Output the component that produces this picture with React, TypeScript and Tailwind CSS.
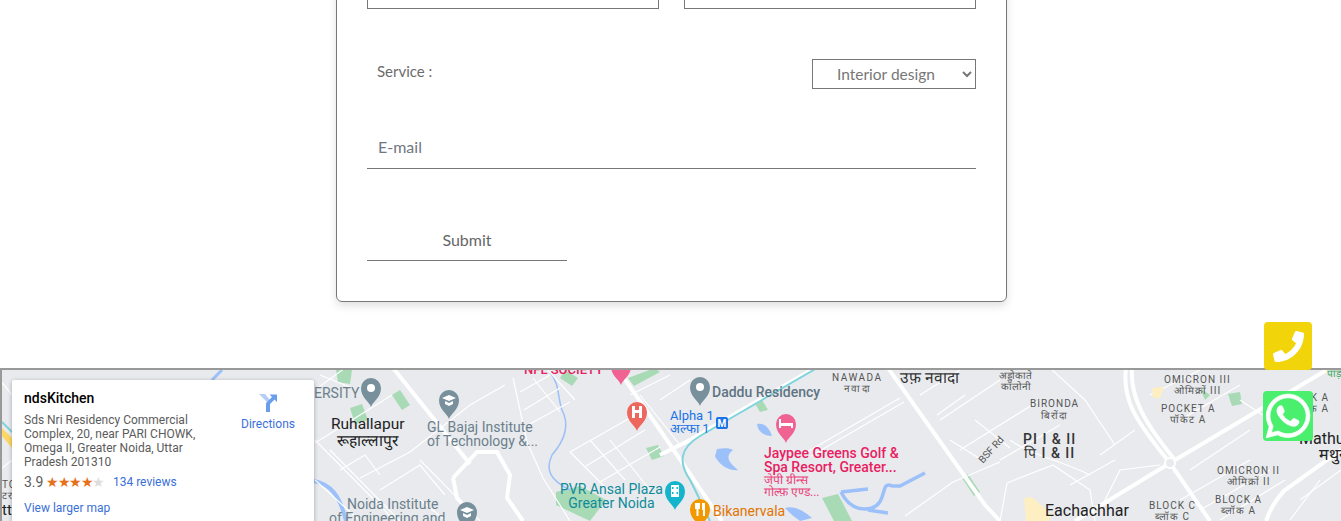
import { FaPhone, FaWhatsapp } from 'react-icons/fa';

const formFont = "font-['Lato','Noto_Sans',sans-serif]";
const mapFont = "font-['Roboto',sans-serif]";

const majorRoads = [
  'M393 368 L470 464',
  'M617 368 L660 430 L722 521',
  'M888 368 L985 505 L1000 521',
  'M1126 368 C1122 400 1135 420 1170 463 L1210 521',
  'M1132 368 C1130 395 1142 420 1175 460',
  'M1170 463 L1330 368',
  'M1170 463 L1075 521',
  'M1341 450 L1285 490 C1275 500 1270 510 1266 521',
  'M815 368 L690 440 L660 455',
  'M453 478 L477 452 L497 452 L510 475 L507 498 L523 521',
  'M453 478 L457 498 L470 512',
];

const minorRoads = [
  'M900 398 L807 452',
  'M904 402 L811 456',
  'M1000 462 L953 482 L905 516',
  'M320 375 L352 388',
  'M315 443 L360 415 L392 395',
  'M360 478 L410 452 L470 405 L505 385',
  'M315 390 L345 368',
  'M330 450 L400 521',
  'M315 440 L395 521',
  'M340 470 L365 455 L380 475',
  'M380 490 L420 465 L445 495',
  'M420 500 L445 520',
  'M513 378 L527 442 L543 478 L570 521',
  'M520 392 L550 375',
  'M524 410 L560 388',
  'M528 425 L570 402',
  'M533 378 L560 412',
  'M548 370 L575 400',
  'M570 452 L630 418',
  'M570 452 L610 492',
  'M586 466 L645 430',
  'M600 482 L660 447',
  'M610 440 L650 490',
  'M590 440 L625 480',
  'M630 395 L670 375',
  'M660 400 L690 380',
  'M640 395 L680 445',
  'M745 410 L690 440',
  'M920 395 L960 370',
  'M940 420 L1000 380',
  'M937 415 L965 395',
  'M960 450 L1040 400',
  'M950 440 L985 462',
  'M975 420 L1010 448',
  'M1000 460 L1060 425',
  'M1050 368 L1085 400 L1115 445',
  'M1010 440 C1030 455 1060 460 1090 475',
  'M1100 510 L1120 470 L1160 465',
  'M1007 483 L1053 465 L1090 490 L1095 521',
  'M1007 483 L1000 521',
  'M1070 485 L1115 460',
  'M1100 455 L1135 430',
  'M1180 420 L1240 385',
  'M1150 395 L1200 370',
  'M1190 470 L1250 430',
  'M1200 510 L1270 470',
  'M1290 520 L1320 480',
  'M1240 400 L1300 440',
  'M1180 500 L1250 460',
  'M1220 520 L1285 480',
  'M1300 500 L1341 470',
  'M0 380 L12 395',
  'M0 470 L12 460',
  'M315 480 L360 521',
  'M420 460 L480 521',
];

const greens = [
  'M336 370 L352 370 L350 384 L338 382 Z',
  'M350 408 L362 404 L368 420 L355 424 Z',
  'M392 395 L400 390 L410 405 L402 410 Z',
  'M565 370 L578 378 L572 386 L560 378 Z',
  'M628 378 L655 368 L660 372 L634 386 Z',
  'M646 448 L658 445 L664 456 L652 460 Z',
  'M556 492 L580 486 L606 500 L590 521 L556 505 Z',
  'M822 498 L838 494 L852 521 L834 521 Z',
  'M754 402 L762 400 L768 410 L760 412 Z',
  'M962 478 L968 474 L980 492 L974 496 Z',
  'M1228 394 L1240 392 L1242 404 L1232 406 Z',
  'M1200 388 L1210 395 L1205 400 Z',
];

const water = [
  'M757 424 C765 422 770 430 772 436 C764 436 758 432 757 424 Z',
  'M717 449 C724 448 730 448 733 450 C725 456 728 462 738 470 C728 472 717 462 715 456 Z',
  'M785 508 C795 505 805 512 812 518 L800 521 L792 515 Z',
];

type Pin = { x: number; y: number; color: string; glyph: 'dot' | 'cap' | 'H' | 'bed' | 'film' | 'fork' };

const pins: Pin[] = [
  { x: 371, y: 392, color: '#78909c', glyph: 'dot' },
  { x: 449, y: 404, color: '#78909c', glyph: 'cap' },
  { x: 467, y: 516, color: '#78909c', glyph: 'cap' },
  { x: 621, y: 370, color: '#f06292', glyph: 'dot' },
  { x: 637, y: 416, color: '#ee675c', glyph: 'H' },
  { x: 700, y: 391, color: '#78909c', glyph: 'dot' },
  { x: 786, y: 428, color: '#f06292', glyph: 'bed' },
  { x: 675, y: 495, color: '#12b5cb', glyph: 'film' },
  { x: 700, y: 513, color: '#f29900', glyph: 'fork' },
];

function MapPin({ x, y, color, glyph }: Pin) {
  return (
    <g transform={`translate(${x} ${y})`}>
      <path d="M0 15 C-2 9 -10 6 -10 -4 A10 10 0 0 1 10 -4 C10 6 2 9 0 15 Z" fill={color} />
      {glyph === 'dot' && <circle cy="-4" r="4" fill="#fff" />}
      {glyph === 'cap' && <path d="M-7 -6 L0 -9 L7 -6 L0 -3 Z M-4 -3 L-4 0 L0 2 L4 0 L4 -3 L0 -1 Z" fill="#fff" />}
      {glyph === 'H' && <path d="M-5 -10 H-2 V-6 H2 V-10 H5 V2 H2 V-3 H-2 V2 H-5 Z" fill="#fff" />}
      {glyph === 'bed' && <path d="M-7 -9 H-5 V-5 H7 V0 H5 V-2 H-5 V0 H-7 Z" fill="#fff" />}
      {glyph === 'film' && <path d="M-4 -10 H4 V2 H-4 Z M-3 -8 V-6 H-1.500 V-8 Z M1.500 -8 V-6 H3 V-8 Z M-3 -3 V-1 H-1.500 V-3 Z M1.500 -3 V-1 H3 V-3 Z" fill="#fff" fillRule="evenodd" />}
      {glyph === 'fork' && <path d="M-5 -10 V-4 H-3.500 V3 H-1.500 V-4 H0 V-10 Z M2 -10 H5 V3 H3 V-3 H2 Z" fill="#fff" />}
    </g>
  );
}

function RoadMap() {
  return (
    <svg viewBox="2 370 1339 151" className="absolute inset-0 h-full w-full">
      {greens.map(d => <path key={d} d={d} fill="#a8dab5" />)}
      {water.map(d => <path key={d} d={d} fill="#9cc0f9" />)}
      <path d="M550 372 C560 385 557 395 562 410 C570 425 565 440 552 455 C545 470 550 480 570 490" fill="none" stroke="#9cc0f9" strokeWidth="1.500" />
      <path d="M314 481 C330 484 340 495 346 521" fill="none" stroke="#9cc0f9" strokeWidth="4" />
      <path d="M212 380 L222 370" fill="none" stroke="#9cc0f9" strokeWidth="3" />
      <path d="M841 492 C846 502 855 512 872 508 C888 502 880 480 892 486 L900 486 L925 473 M868 510 L888 513 M841 492 L868 489" fill="none" stroke="#9cc0f9" strokeWidth="3.500" />
      {minorRoads.map(d => <path key={d} d={d} fill="none" stroke="#fff" strokeWidth="1.200" />)}
      {majorRoads.map(d => <path key={d} d={d} fill="none" stroke="#fff" strokeWidth="4" />)}
      <circle cx="1170" cy="463" r="5" fill="#e8eaed" stroke="#fff" strokeWidth="2" />
      <path d="M817 368 L700 436 C680 448 678 462 690 480 C698 495 702 505 710 521" fill="none" stroke="#7fd4dc" strokeWidth="2" />
      <path d="M2 428 L12 438 V448 L2 436 Z" fill="#fdd663" />
      <path d="M2 422 L12 432" fill="none" stroke="#7fd4dc" strokeWidth="2" />
      <path d="M1152 388 L1164 387 L1160 398 L1153 398 Z" fill="#feefc3" />
      <path d="M1024 498 L1032 497 L1052 515 L1048 521 L1026 521 Z" fill="#feefc3" />
      {pins.map(p => <MapPin key={`${p.x}-${p.y}`} {...p} />)}
    </svg>
  );
}

export default function App() {
  return (
    <div className="relative h-[521px] w-[1341px] overflow-hidden bg-white">
      <div className={`${formFont} ml-[336px] -mt-[20px] h-[322px] w-[671px] rounded-b-md border border-[#777] px-[30px] text-[#6c6c6c] shadow-[0_4px_8px_rgba(0,0,0,0.12)]`}>
        <div className="flex gap-[25px]">
          <input className="h-[28px] w-[292px] border border-[#777]" />
          <input className="h-[28px] w-[292px] border border-[#777]" />
        </div>

        <div className="mt-[50px] flex w-[609px] items-start justify-between pl-[10px]">
          <label className="mt-[1px] text-[15px]">Service :</label>
          <select className="h-[30px] w-[164px] border border-[#777] bg-white pl-[20px] text-[15.5px] text-[#777]">
            <option>Interior design</option>
          </select>
        </div>

        <input
          placeholder="E-mail"
          className="mt-[40px] block h-[40px] w-[609px] border-b border-[#777] px-[11px] pb-[5px] text-[16px] placeholder:text-[#6f7780]"
        />

        <button className="mt-[52px] block h-[40px] w-[200px] border-b border-[#777] pb-[2px] text-[16px] text-[#666]">Submit</button>
      </div>

      <div className={`${mapFont} relative mt-[66px] h-[153px] overflow-hidden border-l-2 border-t-2 border-[#999] bg-[#e8eaed]`}>
        <RoadMap />

        <div className="absolute left-[329px] top-[46px] text-center text-[15.5px] leading-[17px] text-[#222]">Ruhallapur<br />रूहाल्लापुर</div>
        <div className="absolute left-[425px] top-[50px] text-[14px] leading-[14px] text-[#6b7f8c]">GL Bajaj Institute<br />of Technology &amp;...</div>
        <div className="absolute left-[327px] top-[127px] text-center text-[14px] leading-[14px] text-[#6b7f8c]">Noida Institute<br />of Engineering and...</div>
        <div className="absolute left-[312px] top-[13px] text-[14px] text-[#6b7f8c]">ERSITY</div>
        <div className="absolute left-[522px] -top-[10px] text-[13px] font-medium text-[#e91e63]">NFL SOCIETY</div>
        <div className="absolute left-[710px] top-[12px] text-[14px] font-medium text-[#5f7482]">Daddu Residency</div>
        <div className="absolute left-[668px] top-[39px] text-[13px] leading-[13px] text-[#1a73e8]">Alpha 1<br />अल्फा 1</div>
        <div className="absolute left-[714px] top-[47px] flex h-[12px] w-[12px] items-center justify-center rounded-[2px] bg-[#1a73e8] text-[10px] font-bold text-white">M</div>
        <div className="absolute left-[558px] top-[112px] text-center text-[14px] leading-[14px] text-[#0f8b9b]">PVR Ansal Plaza<br />Greater Noida</div>
        <div className="absolute left-[762px] top-[76px] text-[14px] font-medium leading-[14px] text-[#e91e63]">Jaypee Greens Golf &amp;<br />Spa Resort, Greater...</div>
        <div className="absolute left-[762px] top-[104px] text-[12px] leading-[12px] text-[#ec407a]">जेपी ग्रीन्स<br />गोल्फ़ एण्ड...</div>
        <div className="absolute left-[711px] top-[134px] text-[14px] leading-[14px] text-[#e37400]">Bikanervala</div>
        <div className="absolute left-[830px] top-[2px] text-center text-[10px] leading-[11px] tracking-[1.5px] text-[#555]">NAWADA<br />नवादा</div>
        <div className="absolute left-[898px] -top-[3px] text-[15.5px] text-[#333]">उफ़ नवादा</div>
        <div className="absolute left-[997px] top-[0px] text-center text-[10px] leading-[11px] text-[#555]">अड्डोकाते<br />कॉलोनी</div>
        <div className="absolute left-[1028px] top-[28px] text-center text-[10px] leading-[12px] tracking-[1px] text-[#555]">BIRONDA<br />बिरोंदा</div>
        <div className="absolute left-[973px] top-[72px] rotate-[-48deg] text-[10px] text-[#555]">BSF Rd</div>
        <div className="absolute left-[1021px] top-[62px] text-center text-[14px] font-medium leading-[14px] tracking-[1px] text-[#333]">PI I &amp; II<br />पि I &amp; II</div>
        <div className="absolute left-[1043px] top-[129px] text-[16px] text-[#222]">Eachachhar</div>
        <div className="absolute left-[1162px] top-[4px] text-center text-[10px] leading-[11px] tracking-[1px] text-[#555]">OMICRON III<br />ओमिक्रों III</div>
        <div className="absolute left-[1159px] top-[33px] text-center text-[10px] leading-[11px] tracking-[1px] text-[#555]">POCKET A<br />पॉकेट A</div>
        <div className="absolute left-[1215px] top-[95px] text-center text-[10px] leading-[11px] tracking-[1px] text-[#555]">OMICRON II<br />ओमिक्रों II</div>
        <div className="absolute left-[1213px] top-[124px] text-center text-[10px] leading-[11px] tracking-[1px] text-[#555]">BLOCK A<br />ब्लॉक A</div>
        <div className="absolute left-[1147px] top-[130px] text-center text-[10px] leading-[11px] tracking-[1px] text-[#555]">BLOCK C<br />ब्लॉक C</div>
        <div className="absolute left-[1280px] top-[22px] text-right text-[10px] leading-[11px] tracking-[1px] text-[#555]">BLOCK A<br />ब्लॉक A</div>
        <div className="absolute left-[1325px] -top-[4px] text-[10px] text-[#34a853]">पाड़ा</div>
        <div className="absolute left-[1288px] top-[61px] w-[60px] text-right text-[16px] leading-[16px] text-[#222]">Mathur<br />मथुरा</div>
        <div className="absolute left-[0px] top-[109px] text-[10px] leading-[11px] tracking-[1px] text-[#555]">TO<br />टर</div>
        <div className="absolute left-[0px] top-[129px] text-[15px] text-[#222]">tt</div>

        <div className="absolute left-[10px] top-[10px] h-[150px] w-[302px] rounded-[2px] bg-white px-[12px] pt-[9px] shadow-[0_1px_4px_rgba(0,0,0,0.3)]">
          <div className="flex justify-between">
            <div className="w-[180px]">
              <div className="text-[14px] font-medium leading-[19px] text-black">ndsKitchen</div>
              <div className="mt-[5px] text-[12px] leading-[14px] text-[#5b5b5b]">
                Sds Nri Residency Commercial Complex, 20, near PARI CHOWK, Omega II, Greater Noida, Uttar Pradesh 201310
              </div>
              <div className="mt-[5px] flex items-center text-[14px] leading-[16px] text-[#5b5b5b]">
                <span>3.9</span>
                <span className="ml-[3px] text-[14px] tracking-[-1.5px] text-[#e7711b]">★★★★</span>
                <span className="text-[14px] tracking-[-1.5px] text-[#ddd]">★</span>
                <span className="ml-[9px] whitespace-nowrap text-[12px] text-[#3a6fd8]">134 reviews</span>
              </div>
              <div className="mt-[9px] whitespace-nowrap text-[12px] text-[#3a6fd8]">View larger map</div>
            </div>
            <div className="mr-[7px] flex w-[54px] flex-col items-center pt-[3px] text-[12px] leading-[14px] text-[#3a6fd8]">
              <svg viewBox="0 0 20 20" className="h-[20px] w-[20px]">
                <path d="M1 2 H7 L12 8 L10 11 Z" fill="#b3cef6" />
                <path d="M8 20 V11 L14 5 L11.500 2.500 H19 V10 L16.500 7.500 L12 12 V20 Z" fill="#6a9eec" />
              </svg>
              <span className="mt-[5px]">Directions</span>
            </div>
          </div>
        </div>
      </div>

      <a className="absolute left-[1264px] top-[322px] flex h-[48px] w-[48px] items-center justify-center rounded-[4px] bg-[#f2d40a] text-white">
        <FaPhone size={31} />
      </a>
      <a className="absolute left-[1263px] top-[391px] flex h-[50px] w-[50px] items-center justify-center rounded-[4px] bg-[#4aef6e] text-white">
        <FaWhatsapp size={50} stroke="currentColor" strokeWidth={8} />
      </a>
    </div>
  );
}
